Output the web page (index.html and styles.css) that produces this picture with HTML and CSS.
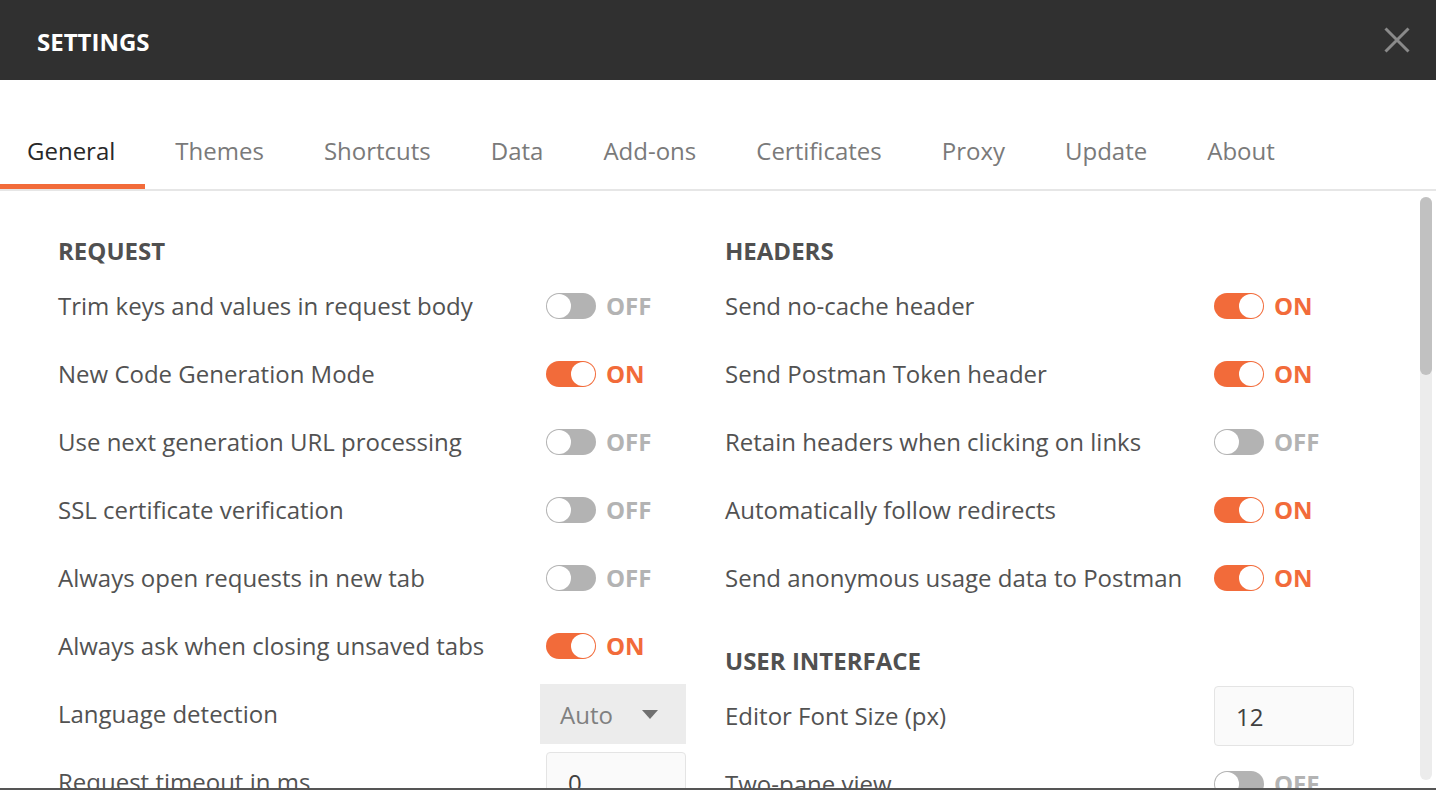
FILE: index.html
```html
<!DOCTYPE html>
<html lang="en">
<head>
<meta charset="utf-8">
<title>Settings</title>
<link rel="stylesheet" href="styles.css">
</head>
<body>
<div class="modal">
  <header class="modal-header">
    <h1 class="modal-title">SETTINGS</h1>
    <button class="close" aria-label="Close">
      <svg width="26" height="26" viewBox="0 0 26 26"><path d="M1.5 1.5 L24.5 24.5 M24.5 1.5 L1.5 24.5" stroke="#8a8a8a" stroke-width="3" fill="none"/></svg>
    </button>
  </header>
  <nav class="tabs">
    <span class="tab active">General</span>
    <span class="tab">Themes</span>
    <span class="tab">Shortcuts</span>
    <span class="tab">Data</span>
    <span class="tab">Add-ons</span>
    <span class="tab">Certificates</span>
    <span class="tab">Proxy</span>
    <span class="tab">Update</span>
    <span class="tab">About</span>
  </nav>
  <main class="content">
    <section class="col">
      <h2 class="section-title">REQUEST</h2>
      <div class="row"><span class="label">Trim keys and values in request body</span><span class="switch"><span class="track off"></span><span class="state off">OFF</span></span></div>
      <div class="row"><span class="label">New Code Generation Mode</span><span class="switch"><span class="track on"></span><span class="state on">ON</span></span></div>
      <div class="row"><span class="label">Use next generation URL processing</span><span class="switch"><span class="track off"></span><span class="state off">OFF</span></span></div>
      <div class="row"><span class="label">SSL certificate verification</span><span class="switch"><span class="track off"></span><span class="state off">OFF</span></span></div>
      <div class="row"><span class="label">Always open requests in new tab</span><span class="switch"><span class="track off"></span><span class="state off">OFF</span></span></div>
      <div class="row"><span class="label">Always ask when closing unsaved tabs</span><span class="switch"><span class="track on"></span><span class="state on">ON</span></span></div>
      <div class="row"><span class="label">Language detection</span><span class="select">Auto<span class="caret"></span></span></div>
      <div class="row"><span class="label">Request timeout in ms</span><span class="input">0</span></div>
    </section>
    <section class="col right">
      <h2 class="section-title">HEADERS</h2>
      <div class="row"><span class="label">Send no-cache header</span><span class="switch"><span class="track on"></span><span class="state on">ON</span></span></div>
      <div class="row"><span class="label">Send Postman Token header</span><span class="switch"><span class="track on"></span><span class="state on">ON</span></span></div>
      <div class="row"><span class="label">Retain headers when clicking on links</span><span class="switch"><span class="track off"></span><span class="state off">OFF</span></span></div>
      <div class="row"><span class="label">Automatically follow redirects</span><span class="switch"><span class="track on"></span><span class="state on">ON</span></span></div>
      <div class="row"><span class="label">Send anonymous usage data to Postman</span><span class="switch"><span class="track on"></span><span class="state on">ON</span></span></div>
      <h2 class="section-title spaced">USER INTERFACE</h2>
      <div class="row"><span class="label">Editor Font Size (px)</span><span class="input">12</span></div>
      <div class="row"><span class="label">Two-pane view</span><span class="switch"><span class="track off"></span><span class="state off">OFF</span></span></div>
    </section>
    <div class="scrollbar"><div class="thumb"></div></div>
  </main>
</div>
</body>
</html>
```
FILE: styles.css
```css
* { box-sizing: border-box; }
html, body { margin: 0; padding: 0; }
body {
  font-family: "Open Sans", "Noto Sans", sans-serif;
  background: #fff;
  width: 1436px;
  height: 790px;
  overflow: hidden;
}
.modal {
  height: 790px;
  display: flex;
  flex-direction: column;
  border-bottom: 2px solid #555;
  overflow: hidden;
}
.modal-header {
  height: 80px;
  flex: none;
  background: #303030;
  display: flex;
  align-items: center;
  justify-content: space-between;
  padding: 0 26px 0 37px;
}
.modal-title {
  margin: 4px 0 0;
  color: #fff;
  font-size: 24px;
  font-weight: 700;
  line-height: 32px;
}
.close {
  background: none;
  border: 0;
  padding: 0;
  width: 26px;
  height: 26px;
  display: block;
  margin-top: -1px;
}
.close svg { display: block; }
.tabs {
  flex: none;
  display: flex;
  padding-top: 55px;
  border-bottom: 2px solid #e6e6e6;
}
.tab {
  font-size: 24px;
  line-height: 32px;
  padding: 0 30px 17px;
  color: #7a7a7a;
  border-bottom: 5px solid transparent;
}
.tab:first-child { padding-left: 27px; }
.tab.active {
  color: #282828;
  border-bottom-color: #f26b3a;
}
.content {
  flex: 1;
  position: relative;
  display: grid;
  grid-template-columns: 628px 628px;
  column-gap: 39px;
  padding: 46px 0 0 58px;
  align-items: start;
  overflow: hidden;
}
.section-title {
  margin: 0 0 7px;
  font-size: 24px;
  line-height: 28px;
  font-weight: 700;
  color: #505050;
}
.section-title.spaced { margin-top: 35px; }
.row {
  height: 68px;
  display: grid;
  grid-template-columns: 488px 140px;
  align-items: center;
}
.right .row { grid-template-columns: 489px 140px; }
.label {
  font-size: 24px;
  color: #525252;
  white-space: nowrap;
  margin-top: -1px;
}
.switch {
  display: flex;
  align-items: center;
  gap: 10px;
}
.track {
  width: 50px;
  height: 26px;
  border-radius: 13px;
  position: relative;
  flex: none;
}
.track::after {
  content: "";
  position: absolute;
  top: 1px;
  width: 24px;
  height: 24px;
  border-radius: 50%;
  background: #fff;
}
.track.off { background: #b3b3b3; }
.track.off::after { left: 1px; }
.track.on { background: #f26b3a; }
.track.on::after { right: 1px; }
.state {
  font-size: 24px;
  font-weight: 700;
  line-height: 26px;
}
.state.off { color: #b3b3b3; }
.state.on { color: #f26b3a; }
.select {
  height: 60px;
  width: 146px;
  margin-left: -6px;
  background: #ececec;
  display: flex;
  align-items: center;
  justify-content: space-between;
  padding: 0 28px 0 20px;
  font-size: 24px;
  color: #808080;
}
.caret {
  width: 0;
  height: 0;
  border-left: 8px solid transparent;
  border-right: 8px solid transparent;
  border-top: 9px solid #707070;
}
.input {
  height: 60px;
  width: 140px;
  background: #fafafa;
  border: 1px solid #e4e4e4;
  border-radius: 4px;
  display: flex;
  align-items: center;
  padding-left: 21px;
  font-size: 24px;
  color: #404040;
}
.scrollbar {
  position: absolute;
  top: 6px;
  right: 4px;
  width: 12px;
  height: 583px;
  background: #ececec;
  border-radius: 6px;
}
.thumb {
  width: 12px;
  height: 178px;
  background: #c1c1c1;
  border-radius: 6px;
}
```
